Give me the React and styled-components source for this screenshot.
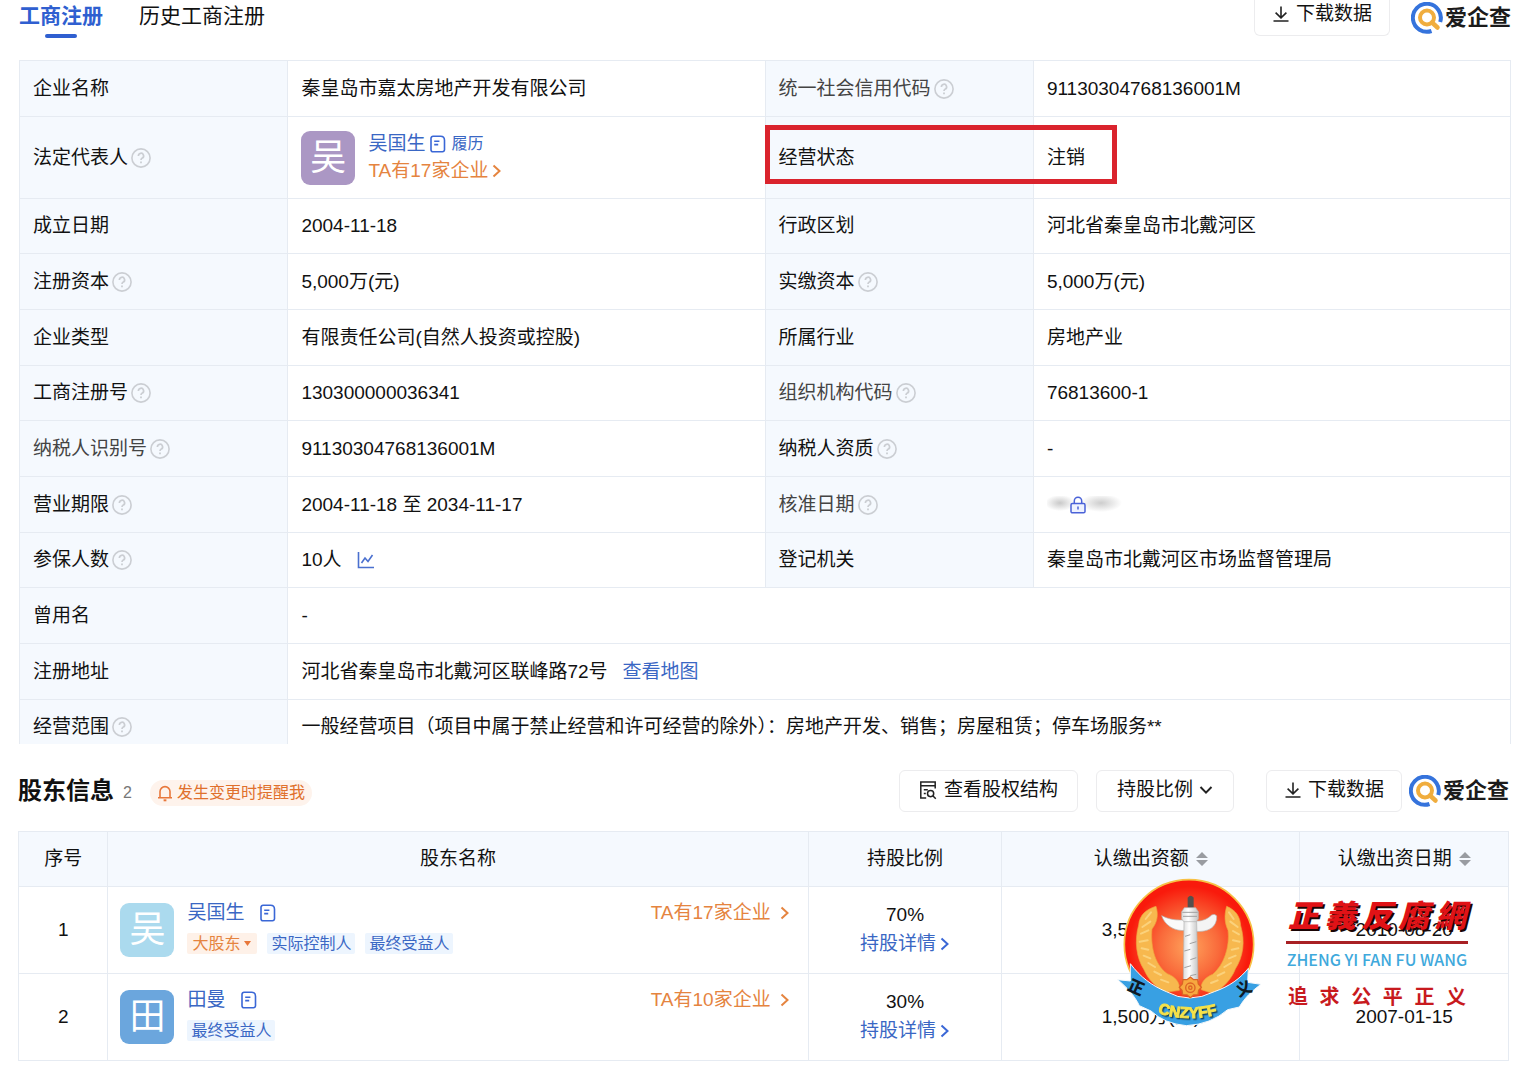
import React from 'react';
import styled, { createGlobalStyle } from 'styled-components';

const GlobalStyle = createGlobalStyle`
  * {
    box-sizing: border-box;
  }

  body {
    margin: 0;
    background: #fff;
    color: #111;
    font-family: "Liberation Sans", "Noto Sans CJK SC", sans-serif;
    font-size: 19px;
    line-height: 24px;
  }

  button,
  select {
    font: inherit;
    color: inherit;
    background: none;
    border: none;
    padding: 0;
    margin: 0;
    cursor: pointer;
  }

  a {
    color: #3a67c4;
    text-decoration: none;
  }
`;

/* ---------- icons ---------- */

const HelpIcon = () => (
  <svg width="20" height="20" viewBox="0 0 20 20" fill="none" stroke="#cbced3">
    <circle cx="10" cy="10" r="9.1" strokeWidth="1.6" />
    <path d="M7.4 7.9a2.6 2.6 0 1 1 3.9 2.2c-.9.5-1.3.9-1.3 1.9" strokeWidth="1.7" />
    <path d="M10 13.4v1.8" strokeWidth="1.8" />
  </svg>
);

const DownloadIcon = () => (
  <svg width="18" height="18" viewBox="0 0 18 18" fill="none" stroke="#222" strokeWidth="1.6">
    <path d="M9 1.5v11M3.6 7.6L9 12.8l5.4-5.2M1.5 16h15" />
  </svg>
);

const ResumeIcon = () => (
  <svg width="18" height="18" viewBox="0 0 18 18" fill="none" stroke="#3a67d6" strokeWidth="1.6">
    <path d="M4 1.3h7.6c2.400 0 3.900 1.500 3.900 3.900v9.500a2 2 0 0 1-2 2H4a2 2 0 0 1-2-2V3.300a2 2 0 0 1 2-2z" />
    <path d="M5.200 6.300h5.200M5.200 9.600h4" />
  </svg>
);

const StructureIcon = () => (
  <svg width="18" height="20" viewBox="0 0 18 20" fill="none" stroke="#222" strokeWidth="1.5">
    <path d="M16.200 8.500V2H1.800v16h5.400M1.800 5.800h14.400M4.800 9.800h4M4.800 13.400h2" />
    <circle cx="11.600" cy="13.600" r="3.100" />
    <path d="M14 16l2.800 2.800" />
  </svg>
);

const BellIcon = () => (
  <svg width="16" height="18" viewBox="0 0 16 18" fill="none" stroke="#e8773a" strokeWidth="1.600">
    <path d="M3 13.500V7.600a5 5 0 0 1 10 0v5.900M1 13.800h14" />
    <path d="M6.600 16.300h2.800" strokeWidth="2" />
  </svg>
);

const Chevron = ({ color, down }) => (
  <svg width={down ? 14 : 10} height={down ? 10 : 14} viewBox={down ? '0 0 14 10' : '0 0 10 14'} fill="none" stroke={color} strokeWidth="2">
    <path d={down ? 'M1.500 2L7 7.600 12.500 2' : 'M1.500 1.500L7.500 7l-6 5.500'} />
  </svg>
);

const SortIcon = () => (
  <svg width="12" height="14" viewBox="0 0 12 14" fill="#999ca1">
    <path d="M6 0l6 6H0zM6 14l6-6H0z" />
  </svg>
);

const TrendIcon = () => (
  <svg width="18" height="18" viewBox="0 0 18 18" fill="none" stroke="#4a70cf" strokeWidth="1.600">
    <path d="M1.500 1v15.500H17" />
    <path d="M4.500 12l3.500-5 3 3.500L15.500 4" />
  </svg>
);

const LockIcon = () => (
  <svg width="16" height="18" viewBox="0 0 16 18" fill="#eef2ff" stroke="#4a62d8" strokeWidth="1.500">
    <path d="M4.300 8V5a3.700 3.700 0 0 1 7.400 0v3" fill="none" />
    <rect x="1" y="7.600" width="14" height="9.200" rx="1.400" />
    <path d="M8 10.600v3" />
  </svg>
);

const BrandIcon = () => (
  <svg width="32" height="32" viewBox="0 0 32 32" fill="none">
    <path d="M20.500 29A14 14 0 1 1 29.200 20" stroke="#3573dc" strokeWidth="4" />
    <circle cx="16" cy="15.500" r="7" stroke="#f0ad3e" strokeWidth="4" />
    <path d="M21 20.500l5.500 5" stroke="#f0ad3e" strokeWidth="4.500" strokeLinecap="round" />
  </svg>
);

const Emblem = () => (
  <svg width="156" height="154" viewBox="0 0 468 462">
    <defs>
      <radialGradient id="sun" cx="50%" cy="52%" r="52%">
        <stop offset="0" stopColor="#ffa35c" />
        <stop offset="0.450" stopColor="#f9693a" />
        <stop offset="0.900" stopColor="#f91a0c" />
      </radialGradient>
      <linearGradient id="stone" x1="0" x2="1">
        <stop offset="0" stopColor="#dcdcdc" />
        <stop offset="0.400" stopColor="#ffffff" />
        <stop offset="1" stopColor="#c4c4c4" />
      </linearGradient>
    </defs>
    <circle cx="234" cy="208" r="194" fill="url(#sun)" stroke="#f7c145" strokeWidth="5" />

    {/* wheat */}
    <g fill="#f7b84e" stroke="#f0a23c" strokeWidth="2">
      <path d="M135 94c-28 8-50 26-52 56-14 50-6 100 16 134 14 32 36 52 66 68l40-6c4-24-14-42-36-50-42-30-50-90-46-134 16-20 20-42 12-68z" />
      <path d="M347 94c28 12 40 30 42 58 14 48 8 92-16 130-12 32-38 58-66 74l-36-12c-4-22 14-38 34-46 34-28 52-84 46-132-10-22-12-44-4-72z" />
    </g>
    <g fill="none" stroke="#fbd27c" strokeWidth="6" strokeLinecap="round">
      <path d="M120 112l-16 20M118 140l-24 16M112 166l-22 10M110 196l-24 4M112 224l-20-4M118 250l-20-8M132 276l-20-12M150 300l-20-10M172 322l-22-8" />
      <path d="M354 112l14 20M358 140l22 16M366 168l18 10M366 196l20 4M362 224l20-4M354 250l20-8M340 276l20-12M320 302l20-10M300 324l20-8" />
    </g>

    {/* column */}
    <path d="M230 68q9-12 18 0v30h-18z" fill="#55504d" />
    <g stroke="#b5b5b5" strokeWidth="2">
      <path d="M152 122c24 12 46 15 72 12v32c-32 4-62-14-72-44z" fill="#fafafa" />
      <path d="M252 138c20 2 38-6 50-18 6-3 12-2 15 3 2 32-24 50-65 46z" fill="#f4f4f4" />
      <path d="M220 98h34l8 12v22l-8 10h-34l-8-10v-22z" fill="url(#stone)" />
      <path d="M219 140h38l4 178h-44z" fill="url(#stone)" />
    </g>
    <path d="M214 112h46M216 124h42M222 184l16-5M236 206l20-6M220 228l18-5M238 254l18-6M220 278l20-6M238 302l18-4" stroke="#a0a0a0" strokeWidth="3" fill="none" />

    {/* ribbon */}
    <path d="M58 266C88 306 122 332 166 350Q234 388 310 350C356 334 388 310 412 280L410 322L450 328C422 348 400 370 385 396L350 404Q300 448 226 452Q160 446 120 408L85 392C70 360 46 336 20 314L58 318Z" fill="#38a0e3" stroke="#f4f8fb" strokeWidth="3" />
    <g fill="#f7a83f" stroke="#dc6325" strokeWidth="4">
      <path d="M238 306l10 8 12 0 2 13 9 10-8 9-2 13-13 1-10 8-10-8-13-1-2-13-8-9 9-10 2-13 12 0z" />
      <circle cx="238" cy="338" r="14" />
      <circle cx="238" cy="338" r="5" />
    </g>
    <g fontFamily="Noto Sans CJK SC, sans-serif" fontWeight="900" fontSize="48" textAnchor="middle">
      <text x="76" y="354" transform="rotate(24 76 336)" fill="#101a24">正</text>
      <text x="398" y="358" transform="rotate(-24 398 340)" fill="#101a24">义</text>
    </g>
    <path id="ribbonLine" d="M134 412q98 32 192 4" fill="none" />
    <g fontFamily="Liberation Sans, sans-serif" fontWeight="700" fontSize="46" textAnchor="middle">
      <text
        fill="#f6e24a"
        stroke="#f6e24a"
        strokeWidth="3"
        style={{ filter: 'drop-shadow(4px 4px 0 #17465f)' }}
      >
        <textPath href="#ribbonLine" startOffset="50%">CNZYFF</textPath>
      </text>
    </g>
  </svg>
);

/* ---------- shared parts ---------- */

const Section = styled.section`
  padding: ${({ $pad }) => $pad};
`;

const Bar = styled.div`
  display: flex;
  align-items: flex-start;
  justify-content: space-between;
`;

const Group = styled.div`
  display: flex;
  align-items: center;
  gap: ${({ $gap }) => $gap || 0}px;
`;

const Brand = styled.a`
  display: flex;
  align-items: center;
  gap: 2px;
  height: 32px;
  color: #1b1b1b;
  font-size: 22px;
  font-weight: 700;
`;

const OutlineButton = styled.button`
  display: flex;
  align-items: center;
  gap: ${({ $wide }) => ($wide ? 7 : 6)}px;
  height: 42px;
  padding: 0 ${({ $wide }) => ($wide ? 19 : 17)}px 2px;
  border: 1px solid #ececee;
  border-radius: 6px;
`;

const CutButton = styled(OutlineButton)`
  height: 36px;
  padding-bottom: 8px;
  border-top: none;
  border-radius: 0 0 6px 6px;
`;

const Tabs = styled.nav`
  display: flex;
  gap: 36px;
  padding-top: 4px;
`;

const Tab = styled.button`
  display: flex;
  flex-direction: column;
  align-items: center;
  gap: 6px;
  font-size: 21px;
  font-weight: ${({ $active }) => ($active ? 700 : 400)};
  color: ${({ $active }) => ($active ? '#2f5fd0' : '#111')};

  &::after {
    content: '';
    width: 32px;
    height: 4px;
    border-radius: 2px;
    background: ${({ $active }) => ($active ? '#2f5fd0' : 'transparent')};
  }
`;

const Avatar = styled.span`
  display: flex;
  align-items: center;
  justify-content: center;
  width: 54px;
  height: 54px;
  border-radius: 9px;
  background: ${({ $color }) => $color};
  color: #fff;
  font-size: 36px;
`;

const MoreLink = styled.a`
  display: inline-flex;
  align-items: center;
  gap: ${({ $gap }) => $gap || 4}px;
  color: ${({ $blue }) => ($blue ? '#3a67c4' : '#e5843f')};
`;

/* ---------- registration table ---------- */

const InfoTable = styled.table`
  width: 100%;
  table-layout: fixed;
  border-collapse: collapse;
  border: 1px solid #e6ebf2;
  border-bottom: none;

  th,
  td {
    height: 56px;
    padding: 0 13px;
    border: 1px solid #e6ebf2;
    text-align: left;
    font-weight: 400;
  }

  th {
    background: #f5f9fe;
  }

  col.label {
    width: 18%;
  }

  tr:nth-child(3n) td,
  tr:nth-child(3n) th {
    height: 55px;
  }

  tr.tall td,
  tr.tall th {
    height: 82px;
  }

  tr.last td,
  tr.last th {
    height: 44px;
    padding-top: 10px;
    border-bottom: none;
  }
`;

const Label = styled.span`
  display: flex;
  align-items: center;
  gap: 3px;
  color: ${({ $soft }) => ($soft ? '#444' : '#111')};
`;

const MarkedHead = styled.th`
  position: relative;
`;

const RedMark = styled.span`
  position: absolute;
  top: 8px;
  left: -1px;
  z-index: 1;
  width: calc(100% + 85px);
  height: 59px;
  border: 5px solid #da232d;
  pointer-events: none;
`;

const Person = styled.div`
  display: flex;
  align-items: center;
  gap: 13px;
`;

const PersonText = styled.div`
  display: flex;
  flex-direction: column;
  align-items: flex-start;
  gap: 3px;
`;

const HolderText = styled(PersonText)`
  gap: 8px;
  padding-bottom: 4px;
`;

const SmallLink = styled.a`
  font-size: 16px;
`;

const Hidden = styled.span`
  display: flex;
  align-items: center;
  width: 76px;
  padding-left: 23px;
  background:
    radial-gradient(ellipse 15px 8px at 13px 7px, #c9c9c9, transparent),
    radial-gradient(ellipse 21px 9px at 54px 7px, #cdcdcd, transparent);
`;

const cells = [
  [['企业名称', false, '秦皇岛市嘉太房地产开发有限公司'], ['统一社会信用代码', true, '91130304768136001M', true]],
  [['法定代表人', true, <LegalPerson key="p" />], ['经营状态', false, '注销']],
  [['成立日期', false, '2004-11-18'], ['行政区划', false, '河北省秦皇岛市北戴河区']],
  [['注册资本', true, '5,000万(元)'], ['实缴资本', true, '5,000万(元)']],
  [['企业类型', false, '有限责任公司(自然人投资或控股)'], ['所属行业', false, '房地产业']],
  [['工商注册号', true, '130300000036341'], ['组织机构代码', true, '76813600-1', true]],
  [['纳税人识别号', true, '91130304768136001M', true], ['纳税人资质', true, '-']],
  [['营业期限', true, '2004-11-18 至 2034-11-17'], ['核准日期', true, <Hidden key="h"><LockIcon /></Hidden>, true]],
  [['参保人数', true, <Group key="g" $gap={15}>10人<TrendIcon /></Group>], ['登记机关', false, '秦皇岛市北戴河区市场监督管理局']],
  [['曾用名', false, '-']],
  [['注册地址', false, <Group key="a" $gap={15}>河北省秦皇岛市北戴河区联峰路72号<a href="#map">查看地图</a></Group>]],
  [['经营范围', true, '一般经营项目（项目中属于禁止经营和许可经营的除外）：房地产开发、销售；房屋租赁；停车场服务**']],
];

function LegalPerson() {
  return (
    <Person>
      <Avatar $color="#ab97c4">吴</Avatar>
      <PersonText>
        <Group $gap={4}>
          <a href="#person">吴国生</a>
          <ResumeIcon />
          <SmallLink href="#resume">履历</SmallLink>
        </Group>
        <MoreLink href="#companies">TA有17家企业<Chevron color="#e5843f" /></MoreLink>
      </PersonText>
    </Person>
  );
}

function Registration() {
  return (
    <InfoTable>
      <colgroup>
        <col className="label" />
        <col />
        <col className="label" />
        <col />
      </colgroup>
      <tbody>
        {cells.map((row, i) => (
          <tr key={i} className={i === 1 ? 'tall' : i === cells.length - 1 ? 'last' : ''}>
            {row.map(([label, help, value, soft]) => {
              const marked = label === '经营状态';
              const Head = marked ? MarkedHead : 'th';
              return (
                <React.Fragment key={label}>
                  <Head scope="row">
                    <Label $soft={soft}>{label}{help && <HelpIcon />}</Label>
                    {marked && <RedMark />}
                  </Head>
                  <td colSpan={row.length === 1 ? 3 : 1}>{value}</td>
                </React.Fragment>
              );
            })}
          </tr>
        ))}
      </tbody>
    </InfoTable>
  );
}

/* ---------- shareholders ---------- */

const Title = styled.h2`
  margin: 0;
  font-size: 24px;
  font-weight: 700;
`;

const Count = styled.span`
  margin: 4px 9px 0 0;
  color: #777;
  font-size: 16px;
`;

const Remind = styled.button`
  display: flex;
  align-items: center;
  gap: 4px;
  height: 26px;
  margin-top: 4px;
  padding: 0 7px;
  border-radius: 13px;
  background: #fef3ec;
  color: #e0702c;
  font-size: 16px;
`;

const RatioField = styled.label`
  display: flex;
  align-items: center;
  height: 42px;
  padding: 0 20px 2px;
  border: 1px solid #ececee;
  border-radius: 6px;

  select {
    appearance: none;
    height: 28px;
    margin-right: 5px;
    outline: none;
  }
`;

const HolderWrap = styled.div`
  position: relative;
`;

const HolderTable = styled.table`
  width: 100%;
  table-layout: fixed;
  border-collapse: collapse;

  th,
  td {
    padding: 0 12px;
    border: 1px solid #e6ebf2;
    text-align: center;
    font-weight: 400;
  }

  th {
    height: 55px;
    background: #f5f9fe;
  }

  td {
    height: 87px;
  }
`;

const Col = styled.col`
  width: ${({ $w }) => $w};
`;

const SortButton = styled.button`
  display: inline-flex;
  align-items: center;
  gap: 7px;
`;

const HolderCell = styled.div`
  display: flex;
  align-items: flex-start;
  justify-content: space-between;
  padding-right: 6px;
`;

const Tags = styled.div`
  display: flex;
  gap: 10px;
`;

const Tag = styled.span`
  display: flex;
  align-items: center;
  gap: 3px;
  height: 21px;
  padding: 0 ${({ $hot }) => ($hot ? 5 : 4)}px;
  border-radius: 2px;
  background: ${({ $hot }) => ($hot ? '#fef1e8' : '#edf5fe')};
  color: ${({ $hot }) => ($hot ? '#e5843f' : '#3a67c4')};
  font-size: 16px;
`;

const Ratio = styled.div`
  display: flex;
  flex-direction: column;
  align-items: center;
  gap: 5px;
`;

const holders = [
  { name: '吴国生', mark: '吴', color: '#abdaee', more: 'TA有17家企业', ratio: '70%', amount: '3,500万(元)', date: '2010-08-20', tags: ['大股东', '实际控制人', '最终受益人'] },
  { name: '田曼', mark: '田', color: '#6ba6dd', more: 'TA有10家企业', ratio: '30%', amount: '1,500万(元)', date: '2007-01-15', tags: ['最终受益人'] },
];

const Watermark = styled.div`
  position: absolute;
  top: 44px;
  right: 41px;
  display: flex;
  gap: 19px;
  pointer-events: none;
`;

const WatermarkText = styled.div`
  display: flex;
  flex-direction: column;
  width: 182px;
  padding-top: 20px;
`;

const Spread = styled.div`
  display: flex;
  justify-content: space-between;
  padding: 0 2px;
`;

const SiteName = styled(Spread)`
  padding-bottom: 8px;
  border-bottom: 3px solid #a82024;
  color: #e01216;
  font-family: "Noto Sans CJK TC", sans-serif;
  font-size: 31px;
  font-weight: 900;
  font-style: italic;
  line-height: 38px;
  text-shadow: 2px 2px 0 #1a0505;
`;

const SiteLatin = styled.div`
  padding: 3px 0 13px;
  color: #3fa9dc;
  font-family: "Noto Sans CJK SC", sans-serif;
  font-size: 16px;
  font-weight: 500;
  text-align: center;
  white-space: nowrap;
`;

const Motto = styled(Spread)`
  color: #c81a1e;
  font-family: "Noto Sans CJK SC", sans-serif;
  font-size: 20px;
  font-weight: 700;
`;

function Holders() {
  return (
    <HolderWrap>
      <HolderTable>
        <colgroup>
          <Col $w="6%" />
          <Col $w="47%" />
          <Col $w="13%" />
          <Col $w="20%" />
          <Col $w="14%" />
        </colgroup>
        <thead>
          <tr>
            <th>序号</th>
            <th>股东名称</th>
            <th>持股比例</th>
            <th><SortButton>认缴出资额<SortIcon /></SortButton></th>
            <th><SortButton>认缴出资日期<SortIcon /></SortButton></th>
          </tr>
        </thead>
        <tbody>
          {holders.map((h, i) => (
            <tr key={h.name}>
              <td>{i + 1}</td>
              <td>
                <HolderCell>
                  <Person>
                    <Avatar $color={h.color}>{h.mark}</Avatar>
                    <HolderText>
                      <Group $gap={15}>
                        <a href="#person">{h.name}</a>
                        <ResumeIcon />
                      </Group>
                      <Tags>
                        {h.tags.map((tag) => (
                          <Tag key={tag} $hot={tag === '大股东'}>
                            {tag}
                            {tag === '大股东' && (
                              <svg width="9" height="6" viewBox="0 0 9 6" fill="#e8773a"><path d="M1 0h7L4.500 5z" /></svg>
                            )}
                          </Tag>
                        ))}
                      </Tags>
                    </HolderText>
                  </Person>
                  <MoreLink href="#companies" $gap={9}>{h.more}<Chevron color="#e5843f" /></MoreLink>
                </HolderCell>
              </td>
              <td>
                <Ratio>
                  {h.ratio}
                  <MoreLink href="#detail" $blue>持股详情<Chevron color="#3a67d6" /></MoreLink>
                </Ratio>
              </td>
              <td>{h.amount}</td>
              <td>{h.date}</td>
            </tr>
          ))}
        </tbody>
      </HolderTable>
      <Watermark>
        <Emblem />
        <WatermarkText>
          <SiteName>{[...'正義反腐網'].map((c) => <span key={c}>{c}</span>)}</SiteName>
          <SiteLatin>ZHENG YI FAN FU WANG</SiteLatin>
          <Motto>{[...'追求公平正义'].map((c) => <span key={c}>{c}</span>)}</Motto>
        </WatermarkText>
      </Watermark>
    </HolderWrap>
  );
}

const TopBar = styled(Bar)`
  height: 60px;
`;

const HolderBar = styled(Bar)`
  align-items: center;
  padding-bottom: 19px;
`;

const App = () => {
  return (
    <>
      <GlobalStyle />
      <Section $pad="0 16px 26px 19px">
        <TopBar>
          <Tabs>
            <Tab $active>工商注册</Tab>
            <Tab>历史工商注册</Tab>
          </Tabs>
          <Group $gap={21}>
            <CutButton><DownloadIcon />下载数据</CutButton>
            <Brand href="#brand"><BrandIcon />爱企查</Brand>
          </Group>
        </TopBar>
        <Registration />
      </Section>
      <Section $pad="0 18px 12px 18px">
        <HolderBar>
          <Group $gap={9}>
            <Title>股东信息</Title>
            <Count>2</Count>
            <Remind><BellIcon />发生变更时提醒我</Remind>
          </Group>
          <Group $gap={32}>
            <Group $gap={18}>
              <OutlineButton $wide><StructureIcon />查看股权结构</OutlineButton>
              <RatioField>
                <select aria-label="持股比例" defaultValue="ratio">
                  <option value="ratio">持股比例</option>
                </select>
                <Chevron color="#222" down />
              </RatioField>
            </Group>
            <Group $gap={7}>
              <OutlineButton><DownloadIcon />下载数据</OutlineButton>
              <Brand href="#brand"><BrandIcon />爱企查</Brand>
            </Group>
          </Group>
        </HolderBar>
        <Holders />
      </Section>
    </>
  );
};

export default App;
